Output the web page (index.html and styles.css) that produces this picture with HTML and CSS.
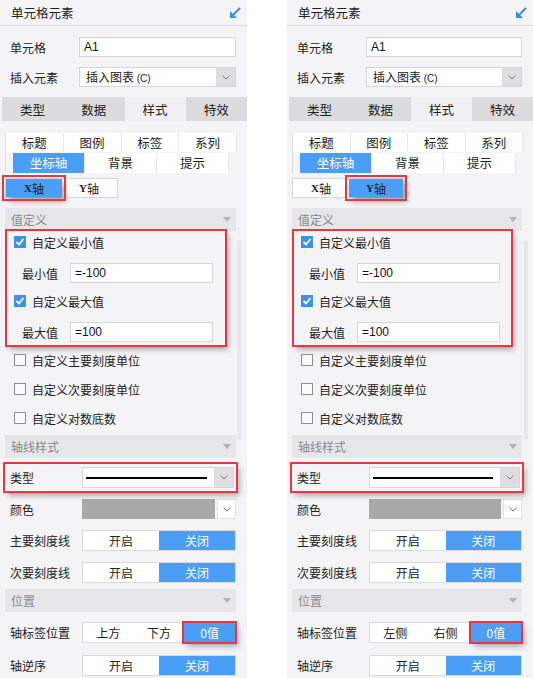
FILE: index.html
```html
<!DOCTYPE html>
<html lang="zh">
<head>
    <meta charset="UTF-8">
    <meta name="viewport" content="width=device-width, initial-scale=1.0">
    <title>单元格元素 - 坐标轴</title>
    <link rel="stylesheet" href="styles.css">
</head>
<body>
<div class="page">

    <!-- X axis panel -->
    <div class="panel">
        <div class="panel-head">
            <span>单元格元素</span>
            <svg class="dock" width="12" height="12" viewBox="0 0 12 12"><line x1="11" y1="1" x2="4" y2="8" stroke="#3b8ee5" stroke-width="2"/><polygon points="1,4 1,11 8,11" fill="#3b8ee5"/></svg>
        </div>
        <div class="panel-body">
            <div class="row cell-row"><span class="label">单元格</span><div class="input">A1</div></div>
            <div class="row insert-row">
                <span class="label">插入元素</span>
                <div class="select">
                    <span class="select-text">插入图表 <small>(C)</small></span>
                    <span class="select-btn"><svg width="8" height="5" viewBox="0 0 8 5"><polyline points="0.5,0.5 4,4 7.5,0.5" fill="none" stroke="#777" stroke-width="1"/></svg></span>
                </div>
            </div>

            <div class="tabs">
                <div class="tab">类型</div>
                <div class="tab">数据</div>
                <div class="tab active">样式</div>
                <div class="tab">特效</div>
            </div>

            <div class="subtabs">
                <div class="subrow">
                    <div class="sub">标题</div><div class="sub">图例</div><div class="sub">标签</div><div class="sub">系列</div>
                </div>
                <div class="subrow second">
                    <div class="sub active">坐标轴</div><div class="sub">背景</div><div class="sub">提示</div>
                </div>
            </div>

            <div class="axis">
                <div class="axis-cell active marked"><b>X</b>轴</div>
                <div class="axis-cell"><b>Y</b>轴</div>
            </div>

            <div class="section">值定义<span class="caret"></span></div>
            <div class="group marked">
                <div class="check on g1"><span class="box"><svg width="12" height="12" viewBox="0 0 12 12"><polyline points="2.5,6 5,8.5 9.5,3" fill="none" stroke="#fff" stroke-width="1.8"/></svg></span>自定义最小值</div>
                <div class="field f1"><span class="flabel">最小值</span><div class="input">=-100</div></div>
                <div class="check on g2"><span class="box"><svg width="12" height="12" viewBox="0 0 12 12"><polyline points="2.5,6 5,8.5 9.5,3" fill="none" stroke="#fff" stroke-width="1.8"/></svg></span>自定义最大值</div>
                <div class="field f1"><span class="flabel">最大值</span><div class="input">=100</div></div>
            </div>
            <div class="check c3"><span class="box"></span>自定义主要刻度单位</div>
            <div class="check c4"><span class="box"></span>自定义次要刻度单位</div>
            <div class="check c4"><span class="box"></span>自定义对数底数</div>

            <div class="section s2">轴线样式<span class="caret"></span></div>
            <div class="row type-row marked">
                <span class="label wide">类型</span>
                <div class="select">
                    <span class="line-box"><span class="line"></span></span>
                    <span class="select-btn"><svg width="8" height="5" viewBox="0 0 8 5"><polyline points="0.5,0.5 4,4 7.5,0.5" fill="none" stroke="#777" stroke-width="1"/></svg></span>
                </div>
            </div>
            <div class="row color-row">
                <span class="label wide">颜色</span>
                <div class="color">
                    <span class="swatch"></span>
                    <span class="select-btn white"><svg width="8" height="5" viewBox="0 0 8 5"><polyline points="0.5,0.5 4,4 7.5,0.5" fill="none" stroke="#777" stroke-width="1"/></svg></span>
                </div>
            </div>
            <div class="row switch-row">
                <span class="label wide">主要刻度线</span>
                <div class="toggle"><span class="opt">开启</span><span class="opt on">关闭</span></div>
            </div>
            <div class="row switch-row">
                <span class="label wide">次要刻度线</span>
                <div class="toggle"><span class="opt">开启</span><span class="opt on">关闭</span></div>
            </div>

            <div class="section s3">位置<span class="caret"></span></div>
            <div class="row pos-row">
                <span class="label wide">轴标签位置</span>
                <div class="toggle"><span class="opt">上方</span><span class="opt">下方</span><span class="opt on marked">0值</span></div>
            </div>
            <div class="row rev-row">
                <span class="label wide">轴逆序</span>
                <div class="toggle"><span class="opt">开启</span><span class="opt on">关闭</span></div>
            </div>
        </div>
        <div class="scroll"></div>
    </div>

    <!-- Y axis panel -->
    <div class="panel">
        <div class="panel-head">
            <span>单元格元素</span>
            <svg class="dock" width="12" height="12" viewBox="0 0 12 12"><line x1="11" y1="1" x2="4" y2="8" stroke="#3b8ee5" stroke-width="2"/><polygon points="1,4 1,11 8,11" fill="#3b8ee5"/></svg>
        </div>
        <div class="panel-body">
            <div class="row cell-row"><span class="label">单元格</span><div class="input">A1</div></div>
            <div class="row insert-row">
                <span class="label">插入元素</span>
                <div class="select">
                    <span class="select-text">插入图表 <small>(C)</small></span>
                    <span class="select-btn"><svg width="8" height="5" viewBox="0 0 8 5"><polyline points="0.5,0.5 4,4 7.5,0.5" fill="none" stroke="#777" stroke-width="1"/></svg></span>
                </div>
            </div>

            <div class="tabs">
                <div class="tab">类型</div>
                <div class="tab">数据</div>
                <div class="tab active">样式</div>
                <div class="tab">特效</div>
            </div>

            <div class="subtabs">
                <div class="subrow">
                    <div class="sub">标题</div><div class="sub">图例</div><div class="sub">标签</div><div class="sub">系列</div>
                </div>
                <div class="subrow second">
                    <div class="sub active">坐标轴</div><div class="sub">背景</div><div class="sub">提示</div>
                </div>
            </div>

            <div class="axis">
                <div class="axis-cell"><b>X</b>轴</div>
                <div class="axis-cell active marked"><b>Y</b>轴</div>
            </div>

            <div class="section">值定义<span class="caret"></span></div>
            <div class="group marked">
                <div class="check on g1"><span class="box"><svg width="12" height="12" viewBox="0 0 12 12"><polyline points="2.5,6 5,8.5 9.5,3" fill="none" stroke="#fff" stroke-width="1.8"/></svg></span>自定义最小值</div>
                <div class="field f1"><span class="flabel">最小值</span><div class="input">=-100</div></div>
                <div class="check on g2"><span class="box"><svg width="12" height="12" viewBox="0 0 12 12"><polyline points="2.5,6 5,8.5 9.5,3" fill="none" stroke="#fff" stroke-width="1.8"/></svg></span>自定义最大值</div>
                <div class="field f1"><span class="flabel">最大值</span><div class="input">=100</div></div>
            </div>
            <div class="check c3"><span class="box"></span>自定义主要刻度单位</div>
            <div class="check c4"><span class="box"></span>自定义次要刻度单位</div>
            <div class="check c4"><span class="box"></span>自定义对数底数</div>

            <div class="section s2">轴线样式<span class="caret"></span></div>
            <div class="row type-row marked">
                <span class="label wide">类型</span>
                <div class="select">
                    <span class="line-box"><span class="line"></span></span>
                    <span class="select-btn"><svg width="8" height="5" viewBox="0 0 8 5"><polyline points="0.5,0.5 4,4 7.5,0.5" fill="none" stroke="#777" stroke-width="1"/></svg></span>
                </div>
            </div>
            <div class="row color-row">
                <span class="label wide">颜色</span>
                <div class="color">
                    <span class="swatch"></span>
                    <span class="select-btn white"><svg width="8" height="5" viewBox="0 0 8 5"><polyline points="0.5,0.5 4,4 7.5,0.5" fill="none" stroke="#777" stroke-width="1"/></svg></span>
                </div>
            </div>
            <div class="row switch-row">
                <span class="label wide">主要刻度线</span>
                <div class="toggle"><span class="opt">开启</span><span class="opt on">关闭</span></div>
            </div>
            <div class="row switch-row">
                <span class="label wide">次要刻度线</span>
                <div class="toggle"><span class="opt">开启</span><span class="opt on">关闭</span></div>
            </div>

            <div class="section s3">位置<span class="caret"></span></div>
            <div class="row pos-row">
                <span class="label wide">轴标签位置</span>
                <div class="toggle"><span class="opt">左侧</span><span class="opt">右侧</span><span class="opt on marked">0值</span></div>
            </div>
            <div class="row rev-row">
                <span class="label wide">轴逆序</span>
                <div class="toggle"><span class="opt">开启</span><span class="opt on">关闭</span></div>
            </div>
        </div>
        <div class="scroll"></div>
    </div>

</div>
</body>
</html>
```

FILE: styles.css
```css
* {
    box-sizing: border-box;
}
body {
    margin: 0;
    background: #fff;
    font-family: "Noto Sans CJK SC", "Liberation Sans", sans-serif;
    font-size: 12px;
    color: #222;
}
.page {
    display: flex;
    gap: 40px;
}
.panel {
    position: relative;
    width: 247px;
    height: 678px;
    background: #f4f4f6;
    overflow: hidden;
}
.panel + .panel {
    width: 246px;
}
.panel-head {
    height: 26px;
    padding: 0 6px 0 11px;
    border-bottom: 1px solid #dcdcdf;
    display: flex;
    align-items: center;
    justify-content: space-between;
    font-size: 12.5px;
}
.panel-body {
    display: flex;
    flex-direction: column;
    padding: 0 11px 0 5px;
}

/* Generic rows */
.row {
    display: flex;
    align-items: center;
    height: 20px;
}
.label {
    width: 74px;
    padding-left: 5px;
    flex-shrink: 0;
}
.label.wide {
    width: 77px;
}
.cell-row {
    margin-top: 11px;
}
.insert-row {
    margin-top: 10px;
}
.input {
    flex: 1;
    height: 20px;
    background: #fff;
    border: 1px solid #d6d6d9;
    padding-left: 4px;
    line-height: 18px;
    font-family: "Liberation Sans", sans-serif;
    color: #111;
}
.select {
    flex: 1;
    display: flex;
    height: 20px;
    background: #fff;
    border: 1px solid #d6d6d9;
}
.select-text {
    flex: 1;
    padding-left: 6px;
    line-height: 18px;
}
.select-text small {
    font-family: "Liberation Sans", sans-serif;
    font-size: 10px;
}
.select-btn {
    width: 19px;
    background: #dedee1;
    display: flex;
    align-items: center;
    justify-content: center;
}
.select-btn.white {
    background: #fff;
    border: 1px solid #e2e2e4;
}

/* Main tabs */
.tabs {
    display: grid;
    grid-template-columns: repeat(4, 1fr);
    height: 24px;
    margin: 10px -11px 0 -3px;
}
.tab {
    background: #dcdcdf;
    display: flex;
    align-items: center;
    justify-content: center;
    font-size: 12.5px;
}
.tab.active {
    background: #f1f1f3;
}

/* Sub tabs */
.subtabs {
    margin: 12px -1px 0 0;
    border-left: 1px solid #dedee0;
}
.subrow {
    display: grid;
    grid-template-columns: repeat(4, 1fr);
    height: 19px;
}
.subrow.second {
    grid-template-columns: repeat(3, 72px);
    padding-left: 7px;
    margin-top: 1px;
    height: 20px;
}
.sub {
    background: #fff;
    border-right: 1px solid #e8e8ea;
    text-align: center;
    line-height: 19px;
    font-size: 12.5px;
}
.sub.active {
    background: #4a9ef6;
    color: #fff;
}

/* X / Y switch */
.axis {
    display: flex;
    margin-top: 5px;
    width: 113px;
    height: 20px;
    border: 1px solid #d8d8da;
    background: #fff;
}
.axis-cell {
    width: 56px;
    display: flex;
    align-items: center;
    justify-content: center;
}
.axis-cell + .axis-cell {
    width: 54px;
}
.axis-cell b {
    font-family: "Liberation Serif", serif;
    font-size: 11px;
}
.axis-cell.active {
    background: #4a9ef6;
}
.axis-cell.marked {
    outline-offset: 2px;
}

/* Red annotation frames */
.marked {
    position: relative;
    z-index: 1;
    outline: 2px solid #ec3540;
    box-shadow: 3px 4px 6px rgba(0, 0, 0, 0.35);
}

/* Section headers */
.section {
    height: 23px;
    margin-top: 10px;
    padding: 0 5px 0 6px;
    background: #e7e7ea;
    color: #8a8a8c;
    display: flex;
    align-items: center;
    justify-content: space-between;
}
.section.s2 {
    margin-top: 7px;
}
.section.s3 {
    margin-top: 6px;
}
.caret {
    border-left: 4px solid transparent;
    border-right: 4px solid transparent;
    border-top: 5px solid #b3b3b6;
}

/* Check boxes */
.check {
    display: flex;
    align-items: center;
    gap: 6px;
    height: 20px;
    padding-left: 9px;
}
.box {
    width: 12px;
    height: 12px;
    border: 1px solid #8e8e90;
    background: #fbfbfb;
}
.check.on .box {
    border: none;
    background: #3f90e8;
}
.box svg {
    display: block;
}
.group {
    margin: 0 11px 0 2px;
    padding: 1px 0 3px;
}
.group .check {
    padding-left: 7px;
}
.g2 {
    margin-top: 8px;
}
.field {
    display: flex;
    align-items: center;
    height: 20px;
    margin-top: 11px;
    padding-left: 15px;
}
.flabel {
    width: 48px;
}
.field .input {
    flex: none;
    width: 143px;
}
.c3 {
    margin-top: 5px;
}
.c4 {
    margin-top: 9px;
}

/* Axis style rows */
.type-row {
    height: 27px;
    margin-top: 6px;
    padding: 3px 2px 3px 0;
}
.type-row .select {
    height: 21px;
}
.line-box {
    flex: 1;
    display: flex;
    align-items: center;
    padding: 0 7px 0 3px;
}
.line {
    flex: 1;
    height: 2px;
    background: #000;
}
.color-row {
    margin-top: 8px;
}
.color {
    flex: 1;
    display: flex;
    gap: 2px;
    height: 20px;
}
.swatch {
    flex: 1;
    background: #a9a9a9;
}
.toggle {
    flex: 1;
    display: flex;
    height: 21px;
    border: 1px solid #dadadc;
    background: #fff;
}
.opt {
    flex: 1;
    display: flex;
    align-items: center;
    justify-content: center;
}
.opt.on {
    background: #4a9ef6;
    color: #fff;
}
.switch-row {
    height: 21px;
    margin-top: 11px;
}
.pos-row {
    height: 21px;
    margin-top: 10px;
}
.rev-row {
    height: 21px;
    margin-top: 12px;
}

/* Scroll thumb on the right edge */
.scroll {
    position: absolute;
    left: 237px;
    top: 240px;
    width: 4px;
    height: 200px;
    border-radius: 2px;
    background: #e8e8eb;
}
```
